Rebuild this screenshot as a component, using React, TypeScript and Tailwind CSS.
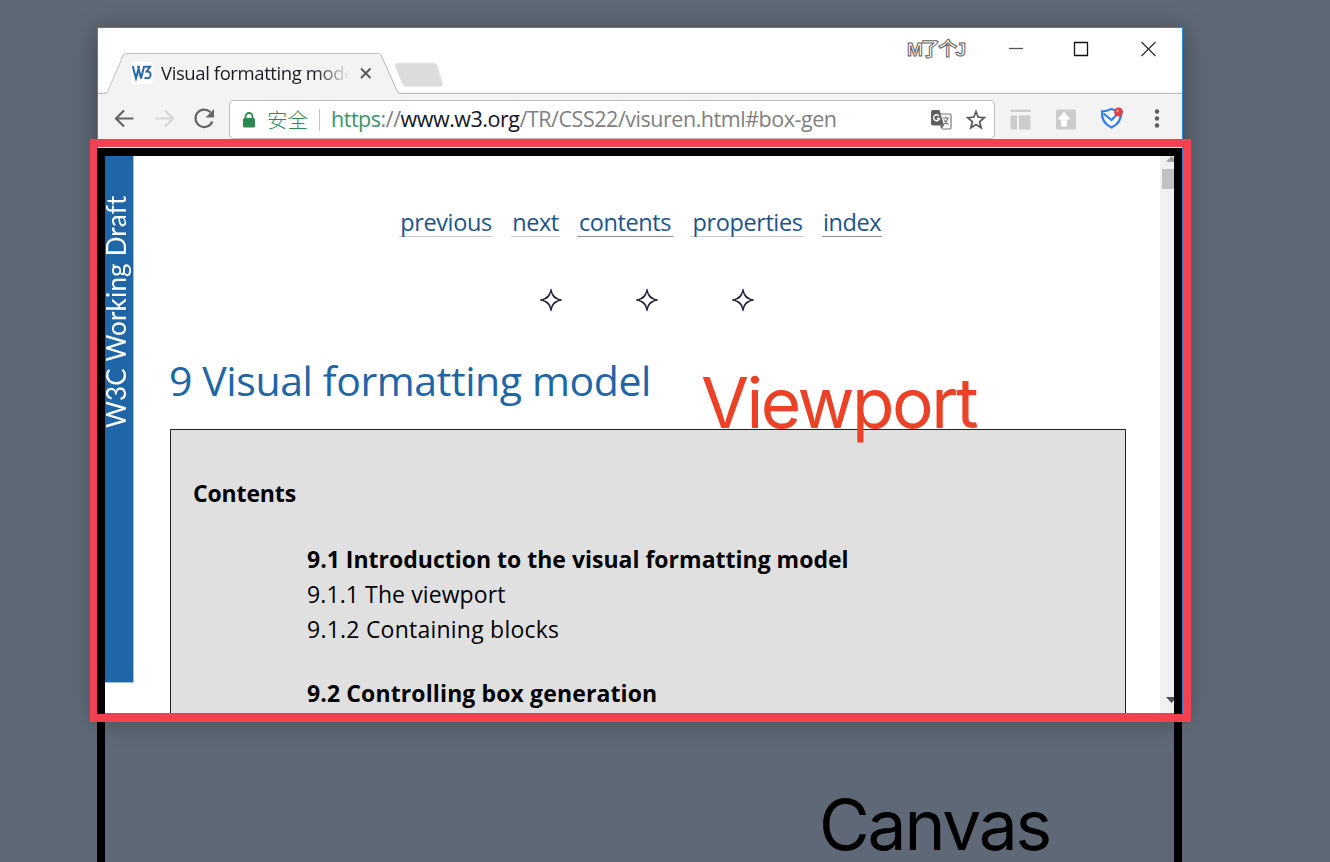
import React from "react";

const navLinks = [
  { label: "previous", cls: "w-[94px] ml-0 border-[#c9c9c9]" },
  { label: "next", cls: "w-[49px] ml-[18px] border-[#c9c9c9]" },
  { label: "contents", cls: "w-[96px] ml-[17px] border-[#8c8c8c]" },
  { label: "properties", cls: "w-[113px] ml-[18px] border-[#c9c9c9]" },
  { label: "index", cls: "w-[60px] ml-[18px] border-[#8c8c8c]" },
];

function Star() {
  return (
    <svg className="w-6 h-6" viewBox="0 0 24 24">
      <path d="M12 0.300Q13.600 10.400 23.700 12Q13.600 13.600 12 23.700Q10.400 13.600 0.300 12Q10.400 10.400 12 0.300Z" fill="#231f30" />
      <path d="M12 4.800Q13.300 10.700 19.200 12Q13.300 13.300 12 19.200Q10.700 13.300 4.800 12Q10.700 10.700 12 4.800Z" fill="white" stroke="white" strokeWidth="0.300" />
      <path d="M12 1.500Q13.600 10.400 22.500 12Q13.600 13.600 12 22.500Q10.400 13.600 1.500 12Q10.400 10.400 12 1.500Z" fill="none" stroke="#231f30" strokeWidth="0.800" />
    </svg>
  );
}

function TabStrip() {
  return (
    <div className="relative flex h-[66px] shrink-0 items-start bg-white">
      <svg className="absolute left-0 top-0 h-[66px] w-full" width="1084" height="66" fill="none">
        <path d="M0 65.3H7Q9 65 10 63L25.500 27Q26.500 25.500 29 25.500H280Q282 25.500 283 27L299 63Q300 65.300 302 65.300H1084" stroke="#bdbdbd" strokeWidth="1.2" fill="none" />
        <path d="M9 66L25.800 27.700Q26.500 26.100 29 26.100H280Q282 26.100 282.500 27.700L299.500 66Z" fill="#f3f3f3" />
        <path d="M300 35H335Q338 35 339 37L344.500 55Q345 58.500 341 58.500H309Q306 58.500 304.500 56L297 38Q296.500 35 300 35Z" fill="#dcdcdc" stroke="#e8e8e8" />
      </svg>
      <div className="relative mt-[34px] ml-[33px] flex h-[22px] items-center">
        <div className="flex h-[22px] w-[22px] items-center justify-center rounded-sm bg-white">
          <svg width="20" height="16" viewBox="0 0 20 16" fill="none" stroke="#2a69ab" strokeWidth="2">
            <path d="M.7 1L4 13.500L7.200 1M6 1L9 13.500L12.200 1" />
            <path d="M12.500 1.700H18L14.700 6.500Q18.800 6.300 18.600 10Q18.200 14.300 12.500 12.800" />
          </svg>
        </div>
        <div className="ml-[8px] h-[26px] w-[188px] overflow-hidden whitespace-nowrap text-[18.500px] leading-[26px] tracking-[-0.400px] text-[#1c1c24] [mask-image:linear-gradient(to_right,black_155px,transparent_188px)]">
          Visual formatting model
        </div>
        <svg className="ml-[11px]" width="12" height="12" stroke="#555" strokeWidth="1.8">
          <path d="M1 1.500L10.500 11M10.500 1.500L1 11" />
        </svg>
      </div>
      <div className="relative ml-auto flex h-[41px] shrink-0 items-center pr-[22px]">
        <span className="mt-[2px] w-[63px] shrink-0 whitespace-nowrap text-[19px] leading-[20px] font-bold tracking-[-1.800px] text-white [-webkit-text-stroke:1px_#606060] [font-family:'Liberation_Sans','Noto_Sans_CJK_SC',sans-serif]">
          M了个J
        </span>
        <svg className="ml-[39px] shrink-0" width="151" height="20" fill="none" stroke="#333" strokeWidth="1.3">
          <path d="M0 9.500H14" stroke="#555" />
          <path d="M65.500 3.500H78.500V16.500H65.500Z" stroke="#111" />
          <path d="M132.500 3L146.500 17M146.500 3L132.500 17" />
        </svg>
      </div>
    </div>
  );
}

function Toolbar() {
  return (
    <div className="flex h-[54px] shrink-0 items-start bg-[#f3f3f3] pt-[6px]">
      <svg className="shrink-0" width="131" height="38" fill="none" stroke="#666" strokeWidth="2.200">
        <path d="M35.500 18.500H18.500M26 10.500L18 18.500L26 26.500" />
        <path d="M57.500 18.500H74.500M67 10.500L75 18.500L67 26.500" stroke="#d6d6d6" />
        <path d="M114.300 21.500A8.700 8.700 0 1 1 112.500 12.300" />
        <path d="M116 9V17.500H107.500Z" fill="#666" stroke="none" />
      </svg>
      <div className="flex h-[39px] w-[766px] shrink-0 items-center rounded-[4px] border-[1.500px] border-[#bdbdbd] bg-white">
        <svg className="ml-[12px]" width="14" height="18" fill="none">
          <rect x="1" y="7" width="12" height="9.500" rx="1.500" fill="#2a8a50" />
          <path d="M3.500 8V5.500A3.500 3.500 0 0 1 10.500 5.500V8" stroke="#2a8a50" strokeWidth="1.800" />
        </svg>
        <span className="ml-[11px] -mt-[2px] w-[42px] whitespace-nowrap text-[20.500px] leading-[34px] text-[#2e8b57] [font-family:'Noto_Sans_CJK_SC',sans-serif] font-light">安全</span>
        <span className="ml-[10px] h-[22px] w-px bg-[#c4c4c4]" />
        <span className="ml-[11px] -mt-[2px] whitespace-nowrap text-[21.500px] leading-[34px] tracking-[-0.470px] text-[#808080]">
          <span className="text-[#3d9465]">https</span>://<span className="text-[#15151d]">www.w3.org</span>/TR/CSS22/visuren.html#box-gen
        </span>
        <svg className="mr-[6px] ml-auto" width="58" height="24" fill="none">
          <path d="M9 6H19.500Q21 6 21 7.500V19.500Q21 21 19.500 21H12" stroke="#777" strokeWidth="1.200" />
          <path d="M3 2H9.500L14 17.500H3Q1 17.500 1 15.500V4Q1 2 3 2Z" fill="#5f5f5f" />
          <path d="M10 17.500H14L11.500 21Z" fill="#5f5f5f" />
          <path d="M9 8A3 3 0 1 0 9.500 10.500H6.800" stroke="white" strokeWidth="1.400" />
          <path d="M12.500 10H19M15.700 8.500V10M18 10Q17 14 13.500 16.500M14 11.500Q15.500 15 18.500 16.500" stroke="#777" strokeWidth="1.100" />
          <path d="M46 3.500L48.200 9.200L54.200 9.700L49.600 13.700L51.100 19.800L46 16.600L40.900 19.800L42.400 13.700L37.800 9.700L43.800 9.200Z" stroke="#5c5c5c" strokeWidth="1.800" />
        </svg>
      </div>
      <svg className="ml-[15px] shrink-0" width="170" height="38" fill="none">
        <path d="M0.500 9.500H20.500V12H0.500ZM0.500 15.500H7V29.500H0.500ZM9 15.500H20.500V29.500H9Z" fill="#cbcbcb" />
        <rect x="46" y="9.500" width="20" height="20" rx="1.500" fill="#cbcbcb" />
        <path d="M54 11.500L60.500 19.500H57V26.500H51V19.500H47.500Z" fill="white" />
        <path d="M101.500 9Q96 11.500 92 11.300Q91 22.500 101.500 27.500Q112 22.500 111 11.300Q107 11.500 101.500 9Z" fill="white" stroke="#2f7df6" strokeWidth="2.200" />
        <path d="M93.500 13.500L101.500 20L109 12.500" stroke="#2f7df6" strokeWidth="2.200" />
        <circle cx="108.500" cy="12" r="4.500" fill="#dc4244" />
        <circle cx="107.500" cy="10.700" r="1.500" fill="#ee8582" />
        <g fill="#5c5c5c">
          <circle cx="147" cy="11.500" r="2.200" />
          <circle cx="147" cy="18.500" r="2.200" />
          <circle cx="147" cy="25.500" r="2.200" />
        </g>
      </svg>
    </div>
  );
}

function Page() {
  return (
    <div className="flex h-[565px] shrink-0 overflow-hidden bg-white">
      <div className="flex h-[535px] w-[36px] shrink-0 items-start justify-end border-r border-b border-[#9fbfda] bg-[#2065a5] pt-[48px]">
        <div className="h-[232px] w-[30px] rotate-180 whitespace-nowrap text-[26px] leading-[26px] tracking-[0.180px] text-white [font-family:Lato,sans-serif] [writing-mode:vertical-rl]">
          W3C Working Draft
        </div>
      </div>
      <div className="flex w-[1026px] shrink-0 flex-col pl-[36px]">
        <div className="mt-[60px] ml-[229px] flex h-[30px]">
          {navLinks.map((l) => (
            <a key={l.label} className={`h-[29px] shrink-0 border-b-[1.500px] text-center text-[23.500px] leading-[29px] tracking-[-0.400px] whitespace-nowrap text-[#1c5489] ${l.cls}`}>
              {l.label}
            </a>
          ))}
        </div>
        <div className="mt-[51px] ml-[369px] flex gap-[72px]">
          <Star />
          <Star />
          <Star />
        </div>
        <h1 className="-ml-px mt-[38px] h-[60px] text-[41px] leading-[60px] tracking-[-0.400px] whitespace-nowrap text-[#2065a5]">9 Visual formatting model</h1>
        <div className="mt-[19px] h-[400px] w-[956px] shrink-0 border border-[#222] bg-[#e0e0e0] pt-[46px] pl-[22px]">
          <h2 className="text-[23px] leading-[35px] font-bold tracking-[-0.150px] text-black">Contents</h2>
          <div className="mt-[31px] pl-[114px] text-[23px] leading-[35px] tracking-[0.100px] whitespace-nowrap text-black">
            <div className="font-bold tracking-[0px]">9.1 Introduction to the visual formatting model</div>
            <div>9.1.1 The viewport</div>
            <div className="tracking-[0.230px]">9.1.2 Containing blocks</div>
            <div className="mt-[29px] font-bold tracking-[0.120px]">9.2 Controlling box generation</div>
          </div>
        </div>
      </div>
      <div className="flex flex-1 flex-col bg-[#f1f1f1]">
        <svg className="mt-[8px] ml-[6px]" width="12" height="6"><path d="M0 6L5.500 0L11 6Z" fill="#a3a3a3" /></svg>
        <div className="mt-[7px] ml-[2px] h-[20px] bg-[#c1c1c1]" />
        <svg className="mt-auto mb-[10px] ml-[6px]" width="12" height="6"><path d="M0 0L5.500 6L11 0Z" fill="#505050" /></svg>
      </div>
    </div>
  );
}

export default function App() {
  return (
    <div className="relative h-[862px] w-[1330px] overflow-hidden bg-[#5e6876] pt-[27px] pl-[97px] [font-family:'Open_Sans','Noto_Sans_CJK_SC',sans-serif]">
      <div className="flex h-[687px] w-[1086px] flex-col border border-[#2f86d2] bg-white shadow-[0_5px_22px_rgba(0,0,0,0.35)]">
        <TabStrip />
        <Toolbar />
        <Page />
      </div>
      <div className="absolute top-[139px] left-[90px] h-[583px] w-[1101px] border-8 border-[#f3424d]" />
      <div className="absolute top-[148px] left-[97px] h-[730px] w-[1085px] border-8 border-black" />
      <div className="absolute top-[714px] left-[90px] h-[8px] w-[1101px] bg-[#f3424d]" />
      <div className="absolute top-[361px] left-[701px] text-[69.500px] leading-[84px] tracking-[-2.500px] whitespace-nowrap text-[#eb4126] [font-family:Inter,sans-serif]">Viewport</div>
      <div className="absolute top-[788px] left-[819px] text-[69.500px] leading-[74px] tracking-[-2.200px] whitespace-nowrap text-black [font-family:Inter,sans-serif]">Canvas</div>
    </div>
  );
}
